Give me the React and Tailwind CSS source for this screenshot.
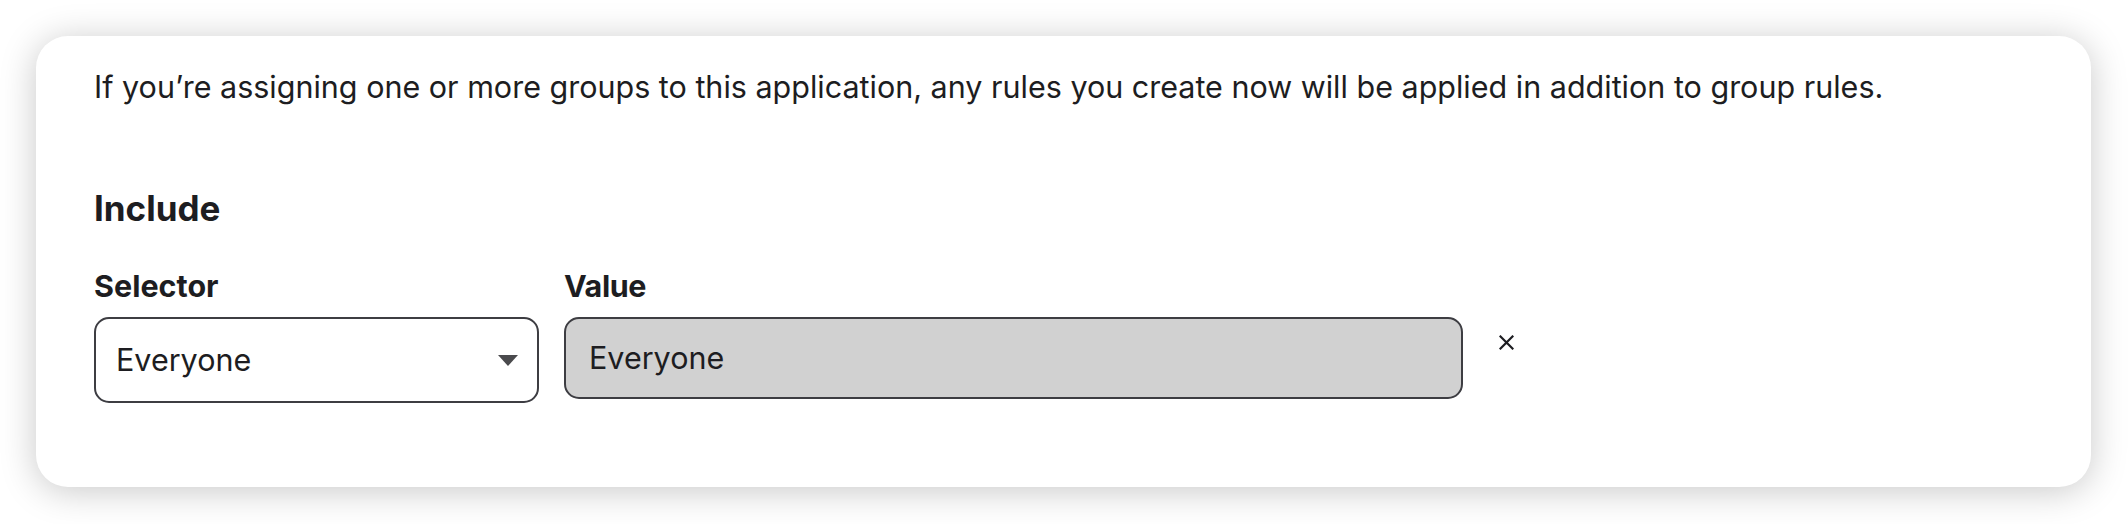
import React from 'react';

const ChevronDown = () => (
    <svg width="20" height="11" viewBox="0 0 20 11" className="shrink-0">
        <path d="M0 0 L20 0 L10 11 Z" fill="#4a4a4d" />
    </svg>
);

const CloseIcon = () => (
    <svg width="15" height="15" viewBox="0 0 15 15">
        <path d="M1.5 1.5 L13.5 13.5 M13.5 1.5 L1.5 13.5" stroke="#1d1d21" strokeWidth="2.2" strokeLinecap="square" />
    </svg>
);

const App = () => {
    return (
        <div className="w-[2128px] h-[524px] bg-white p-[36px] pr-[37px] font-['Inter','Liberation_Sans',sans-serif] text-[#1d1d21]">
            <div className="h-[451px] rounded-[32px] bg-white shadow-[0_4px_36px_rgba(0,0,0,0.22)] pl-[58px] pt-[28px] flex flex-col">
                {/* Intro copy */}
                <p className="text-[30.5px] leading-[45px]">
                    If you’re assigning one or more groups to this application, any rules you create now will be applied in addition to group rules.
                </p>

                {/* Include section */}
                <h2 className="mt-[78px] text-[35px] leading-[43px] font-bold">Include</h2>

                <div className="mt-[36px] flex items-start">
                    <div className="flex flex-col w-[445px]">
                        <label className="text-[30.5px] leading-[40px] font-bold">Selector</label>
                        <div className="mt-[11px] h-[86px] rounded-[15px] border-2 border-[#3d3d42] bg-white flex items-center justify-between pl-[20px] pr-[19px]">
                            <span className="text-[30.5px] leading-none">Everyone</span>
                            <ChevronDown />
                        </div>
                    </div>

                    <div className="ml-[25px] flex flex-col w-[899px]">
                        <label className="text-[30.5px] leading-[40px] font-bold tracking-[-0.4px]">Value</label>
                        <div className="mt-[11px] h-[82px] rounded-[15px] border-2 border-[#3d3d42] bg-[#d1d1d1] flex items-center pl-[23px]">
                            <span className="text-[30.5px] leading-none">Everyone</span>
                        </div>
                    </div>

                    <button className="ml-[36px] mt-[69px] p-0 flex items-center justify-center">
                        <CloseIcon />
                    </button>
                </div>
            </div>
        </div>
    );
};

export default App;
